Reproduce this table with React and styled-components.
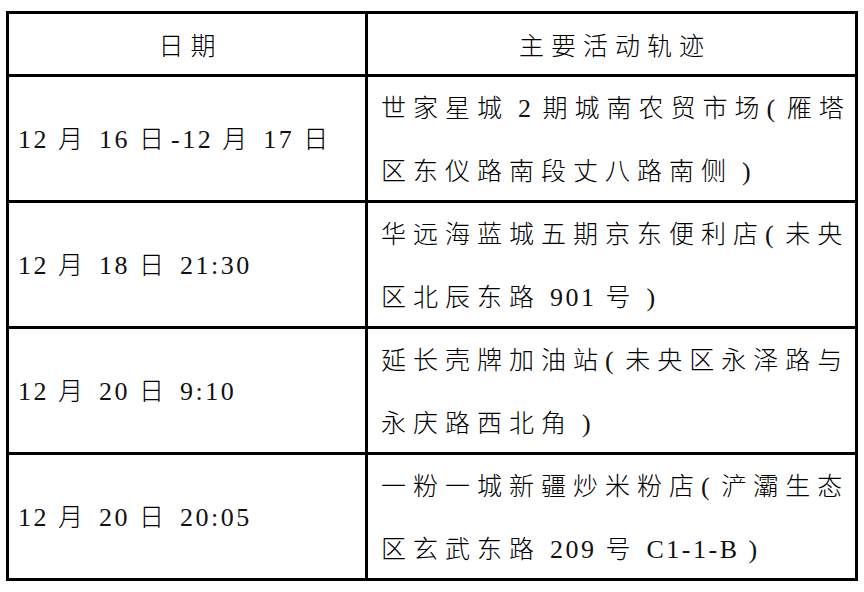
import styled, { createGlobalStyle } from 'styled-components';

const GlobalStyle = createGlobalStyle`
  html, body {
    margin: 0;
    padding: 0;
    background: #fff;
  }
  body {
    font-family: "Liberation Serif", "Times New Roman", "Noto Sans CJK SC", serif;
    color: #111;
  }
`;

const Page = styled.div`
  padding: 11px 0 0 6px;
`;

const Grid = styled.div`
  display: grid;
  grid-template-columns: 359px 490px;
  grid-template-rows: 63px repeat(4, 126px);
  width: 852px;
  box-sizing: border-box;
  border-left: 3px solid #000;
  border-top: 3px solid #000;
`;

const Cell = styled.div`
  box-sizing: border-box;
  border-right: 3px solid #000;
  border-bottom: 3px solid #000;
  display: flex;
  flex-direction: column;
  justify-content: center;
  align-items: ${p => (p.$center ? 'center' : 'flex-start')};
  padding-left: ${p => (p.$center ? '7px' : p.$pad || '0')};
  font-size: 25px;
  letter-spacing: 7px;
  white-space: nowrap;
`;

const Line = styled.div`
  line-height: 61px;
  font-family: "Noto Sans CJK SC", sans-serif;
  font-weight: 300;
  color: #000;
`;

const Latin = styled.span`
  font-family: "Liberation Serif", "Times New Roman", Tinos, "DejaVu Serif", serif;
  font-size: 26px;
  letter-spacing: 2.5px;
  font-weight: 400;
  color: #111;
`;

// 英数字和汉字分开排版，数字间距更窄
function Text({ children }) {
  let parts = children.split(/([\x00-\x7F]+)/).filter(s => s !== '');
  return parts.map((s, i) =>
    /^[\x00-\x7F]+$/.test(s) ? <Latin key={i}>{s}</Latin> : <span key={i}>{s}</span>
  );
}

const rows = [
  {
    date: '12 月 16 日-12 月 17 日',
    place: ['世家星城 2 期城南农贸市场( 雁塔', '区东仪路南段丈八路南侧 )'],
  },
  {
    date: '12 月 18 日 21:30',
    place: ['华远海蓝城五期京东便利店( 未央', '区北辰东路 901 号 )'],
  },
  {
    date: '12 月 20 日 9:10',
    place: ['延长壳牌加油站( 未央区永泽路与', '永庆路西北角 )'],
  },
  {
    date: '12 月 20 日 20:05',
    place: ['一粉一城新疆炒米粉店( 浐灞生态', '区玄武东路 209 号 C1-1-B )'],
  },
];

export default function App() {
  return (
    <>
      <GlobalStyle />
      <Page>
        <Grid>
          <Cell $center>
            <Line>日期</Line>
          </Cell>
          <Cell $center>
            <Line>主要活动轨迹</Line>
          </Cell>
          {rows.map((r, i) => [
            <Cell key={'d' + i} $pad="9px">
              <Line>
                <Text>{r.date}</Text>
              </Line>
            </Cell>,
            <Cell key={'p' + i} $pad="13px">
              {r.place.map((l, j) => (
                <Line key={j}>
                  <Text>{l}</Text>
                </Line>
              ))}
            </Cell>,
          ])}
        </Grid>
      </Page>
    </>
  );
}
